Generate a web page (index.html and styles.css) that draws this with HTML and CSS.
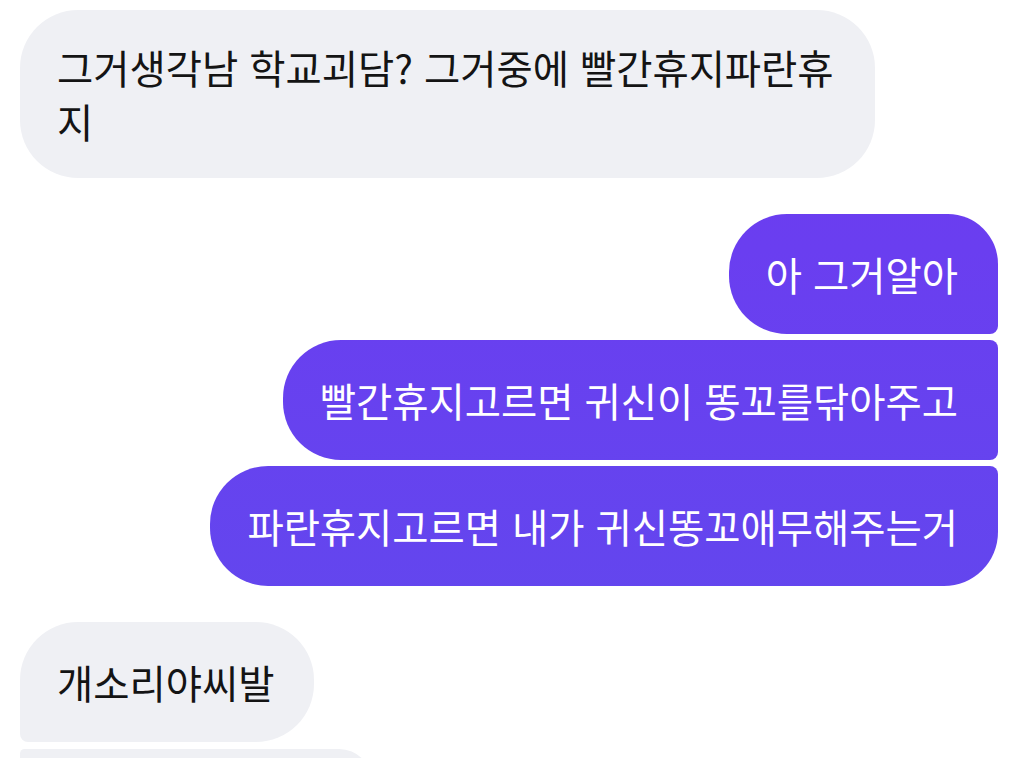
FILE: index.html
```html
<!DOCTYPE html>
<html lang="ko">
<head>
<meta charset="utf-8">
<link rel="stylesheet" href="styles.css">
</head>
<body>
<div class="chat">
  <div class="msg them solo tall">그거생각남 학교괴담? 그거중에 빨간휴지파란휴지</div>
  <div class="group me-group">
    <div class="msg me first">아 그거알아</div>
    <div class="msg me mid">빨간휴지고르면 귀신이 똥꼬를닦아주고</div>
    <div class="msg me last">파란휴지고르면 내가 귀신똥꼬애무해주는거</div>
  </div>
  <div class="group them-group">
    <div class="msg them first">개소리야씨발</div>
    <div class="msg them next">&nbsp;</div>
  </div>
</div>
</body>
</html>
```
FILE: styles.css
```css
html, body {
  margin: 0;
  padding: 0;
  background: #ffffff;
}
body {
  width: 1022px;
  height: 758px;
  overflow: hidden;
  font-family: "Noto Sans CJK KR", "Noto Sans", sans-serif;
}
.chat {
  display: flex;
  flex-direction: column;
  padding: 10px 24px 0 20px;
  gap: 36px;
  height: 758px;
  box-sizing: border-box;
  overflow: hidden;
}
.group {
  display: flex;
  flex-direction: column;
  gap: 6px;
  flex-shrink: 0;
}
.me-group { align-items: flex-end; }
.them-group { align-items: flex-start; gap: 7px; }
.msg {
  font-size: 39.4px;
  line-height: 54px;
  padding: 33px 40px 33px 37px;
  border-radius: 58px;
  box-sizing: border-box;
  flex-shrink: 0;
}
.them {
  background: #eff0f4;
  color: #141414;
  align-self: flex-start;
}
.solo.tall {
  width: 855px;
  padding: 30px 34px 30px 37px;
}
.me {
  color: #ffffff;
  background: linear-gradient(180deg, #6c3cf0 0px, #6a3ef0 250px, #6346ee 600px);
  background-attachment: fixed;
}
.me.first { border-radius: 58px 50px 8px 58px; }
.me.mid { border-radius: 58px 8px 8px 58px; }
.me.last { border-radius: 58px 8px 54px 58px; }
.them.first { border-radius: 58px 58px 58px 8px; }
.them.next { border-radius: 8px 58px 58px 58px; width: 352px; height: 60px; }
```
